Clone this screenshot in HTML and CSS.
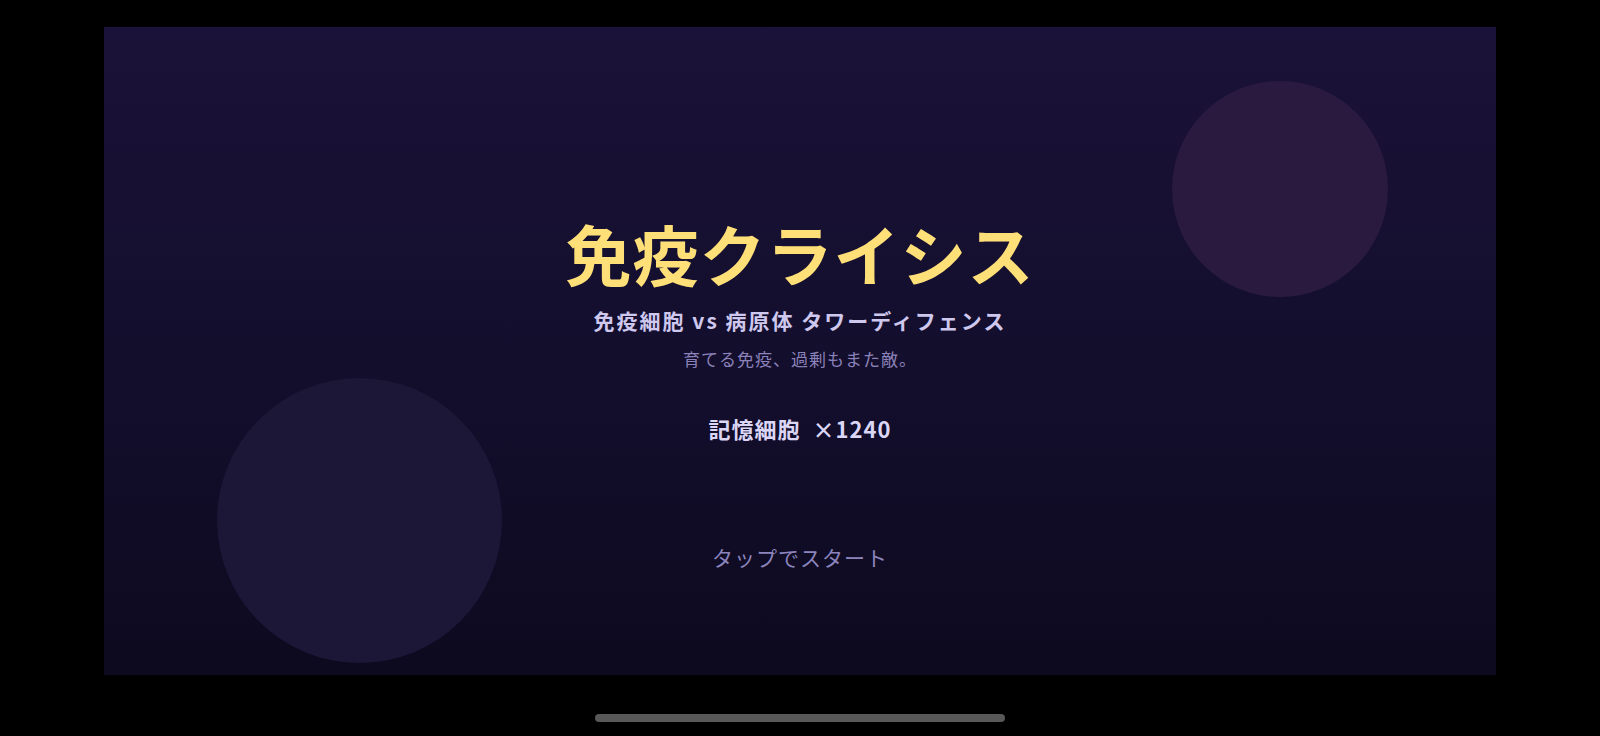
FILE: index.html
```html
<!DOCTYPE html>
<html lang="ja">
  <head>
    <meta charset="UTF-8" />
    <meta name="viewport" content="width=device-width, initial-scale=1.0" />
    <title>免疫クライシス</title>
    <link rel="stylesheet" href="styles.css">
  </head>
  <body>
    <div class="screen">
      <div class="bubble bubble-top"></div>
      <div class="bubble bubble-bottom"></div>

      <main class="title-screen">
        <h1 class="game-title">免疫クライシス</h1>
        <p class="subtitle">免疫細胞 vs 病原体 タワーディフェンス</p>
        <p class="tagline">育てる免疫、過剰もまた敵。</p>
        <p class="memory">記憶細胞&nbsp;&nbsp;×1240</p>
        <p class="tap-start">タップでスタート</p>
      </main>
    </div>
    <div class="home-indicator"></div>
  </body>
</html>
```

FILE: styles.css
```css
/* Reset some default styles */
body,
h1,
p,
main,
div {
  margin: 0;
  padding: 0;
  box-sizing: border-box;
}

body {
  font-family: "Noto Sans CJK JP", "Noto Sans", sans-serif;
  background-color: #000;
  min-height: 100vh;
  padding: 27px 104px 0 104px;
  display: flex;
  flex-direction: column;
  align-items: center;
}

.screen {
  position: relative;
  width: 1392px;
  height: 648px;
  overflow: hidden;
  background: linear-gradient(to bottom, #1a1238 0%, #130e2c 55%, #0d0a1f 100%);
}

.bubble {
  position: absolute;
  border-radius: 50%;
}

.bubble-top {
  left: 1068px;
  top: 54px;
  width: 216px;
  height: 216px;
  background-color: #2a1a3f;
}

.bubble-bottom {
  left: 113px;
  top: 351px;
  width: 285px;
  height: 285px;
  background-color: #1c1637;
}

.title-screen {
  position: relative;
  display: flex;
  flex-direction: column;
  align-items: center;
  padding-top: 185px;
  text-align: center;
}

.game-title {
  font-size: 66px;
  font-weight: 700;
  line-height: 80px;
  color: #ffdf78;
  letter-spacing: 1px;
}

.subtitle {
  margin-top: 13px;
  font-size: 21px;
  font-weight: 700;
  line-height: 30px;
  color: #cfc8ee;
  letter-spacing: 2px;
}

.tagline {
  margin-top: 12px;
  font-size: 17px;
  line-height: 24px;
  color: #8b82b9;
  letter-spacing: 1px;
}

.memory {
  margin-top: 42px;
  font-size: 22px;
  font-weight: 700;
  line-height: 30px;
  color: #dcd6f6;
  letter-spacing: 1px;
}

.tap-start {
  margin-top: 99px;
  font-size: 21px;
  line-height: 30px;
  color: #8c85bd;
  letter-spacing: 1px;
}

.home-indicator {
  margin-top: 39px;
  width: 410px;
  height: 8px;
  border-radius: 4px;
  background-color: #585858;
}
```
